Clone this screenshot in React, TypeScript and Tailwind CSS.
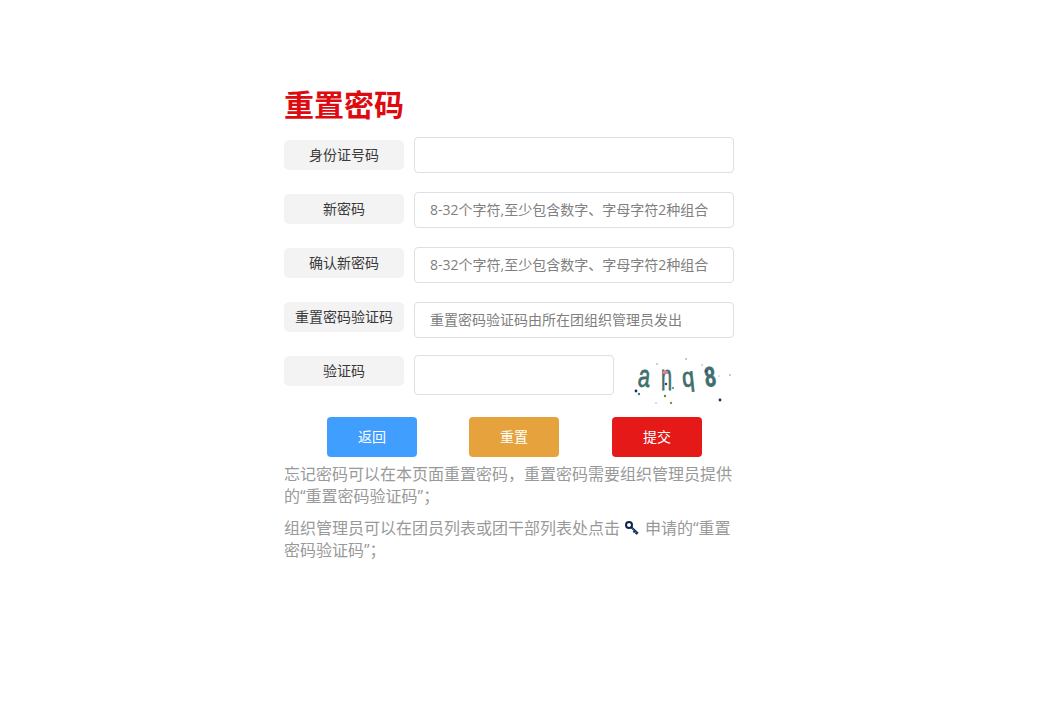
import React from 'react';

const placeholderPwd = '8-32个字符,至少包含数字、字母字符2种组合';

const Label = ({ text, className }: { text: string; className: string }) => (
  <div className={`flex items-center justify-center w-[120px] h-[30px] rounded-[5px] bg-[#f3f3f3] text-sm text-[#3a3a3a] shrink-0 ${className}`}>
    {text}
  </div>
);

const inputClass =
  'h-9 w-[320px] ml-2.5 pl-[15px] pr-4 pb-[2px] border border-[#dcdfe6] rounded-[4px] bg-white text-sm outline-none placeholder:text-[#808080]';

const Captcha = () => (
  <svg width="100" height="50" viewBox="0 0 100 50" className="ml-5 -mt-[1px] shrink-0">
    <g fill="#3f6f6c" stroke="#3f6f6c" strokeWidth="0.8" fontFamily="'Liberation Sans', sans-serif">
      <text fontSize="32" fontStyle="italic" transform="translate(4 33) scale(0.67 1)">a</text>
      <text fontSize="36" transform="translate(27 36) scale(0.55 1)">n</text>
      <text fontSize="27" transform="translate(49 33) rotate(-6) scale(0.8 1)">q</text>
      <text fontSize="28" fontWeight="bold" transform="translate(72 33) rotate(-8) scale(0.7 1)">8</text>
    </g>
    <rect x="29" y="17" width="5" height="3" fill="#e77a9c" />
    <g>
      <circle cx="2" cy="37" r="1.4" fill="#2b1a7a" />
      <circle cx="5" cy="40" r="1.2" fill="#2f7d7d" />
      <circle cx="31" cy="42" r="1.2" fill="#5c8a3a" />
      <circle cx="37" cy="49" r="1.2" fill="#8a8a4a" />
      <circle cx="22" cy="49" r="0.7" fill="#9a9ad0" />
      <circle cx="86" cy="46" r="1.4" fill="#2b1a7a" />
      <circle cx="23" cy="10" r="0.8" fill="#c77a7a" />
      <circle cx="52" cy="5" r="0.8" fill="#8a8a6a" />
      <circle cx="68" cy="11" r="0.7" fill="#6aa06a" />
      <circle cx="96" cy="21" r="0.7" fill="#c74a4a" />
      <circle cx="85" cy="22" r="0.6" fill="#7a9a9a" />
      <circle cx="32" cy="30" r="1.2" fill="#4a2a4a" />
      <circle cx="39" cy="34" r="1" fill="#3f7f7f" />
      <circle cx="72" cy="17" r="1.3" fill="#4a3aa0" />
    </g>
  </svg>
);

const KeyIcon = () => (
  <svg width="16" height="16" viewBox="0 0 16 16" className="inline-block align-[-2px] ml-1 mr-[5px]">
    <circle cx="5" cy="5" r="3" fill="none" stroke="#0b2545" strokeWidth="2" />
    <path d="M7.3 7.3 L14 13.5 M11 10.5 L9.5 12.5 M13 12.5 L11.8 14.2" fill="none" stroke="#0b2545" strokeWidth="2" />
    <path d="M8 8 L14 13.5" fill="none" stroke="#1a7fd0" strokeWidth="0.7" />
  </svg>
);

export default function App() {
  return (
    <div className="min-h-[723px] bg-white font-['Open_Sans','Noto_Sans_CJK_SC',sans-serif] pl-[284px] pt-[85px]">
      <div className="w-[450px]">
        <h1 className="text-[30px] leading-[40px] font-bold text-[#dd0a10] mb-3">重置密码</h1>

        <div className="flex items-start mb-[19px]">
          <Label text="身份证号码" className="mt-[3px]" />
          <input className={inputClass} />
        </div>
        <div className="flex items-start mb-[19px]">
          <Label text="新密码" className="mt-[2px]" />
          <input className={inputClass} placeholder={placeholderPwd} />
        </div>
        <div className="flex items-start mb-[19px]">
          <Label text="确认新密码" className="mt-[1px]" />
          <input className={inputClass} placeholder={placeholderPwd} />
        </div>
        <div className="flex items-start mb-[17px]">
          <Label text="重置密码验证码" />
          <input className={inputClass} placeholder="重置密码验证码由所在团组织管理员发出" />
        </div>
        <div className="flex items-start h-10">
          <Label text="验证码" className="mt-[1px]" />
          <input className="h-10 w-[200px] ml-2.5 px-4 border border-[#dcdfe6] rounded-[4px] bg-white text-sm outline-none" />
          <Captcha />
        </div>

        <div className="flex justify-between pl-[43px] pr-[32px] mt-[22px]">
          <button className="w-[90px] h-10 rounded-[4px] bg-[#409eff] text-white text-sm">返回</button>
          <button className="w-[90px] h-10 rounded-[4px] bg-[#e6a23c] text-white text-sm -ml-[1px]">重置</button>
          <button className="w-[90px] h-10 rounded-[4px] bg-[#e61919] text-white text-sm">提交</button>
        </div>

        <div className="mt-1.5 text-base leading-[22px] text-[#999]">
          <p className="mb-2.5">忘记密码可以在本页面重置密码，重置密码需要组织管理员提供的“重置密码验证码”；</p>
          <p>
            组织管理员可以在团员列表或团干部列表处点击
            <KeyIcon />
            申请的“重置密码验证码”；
          </p>
        </div>
      </div>
    </div>
  );
}
